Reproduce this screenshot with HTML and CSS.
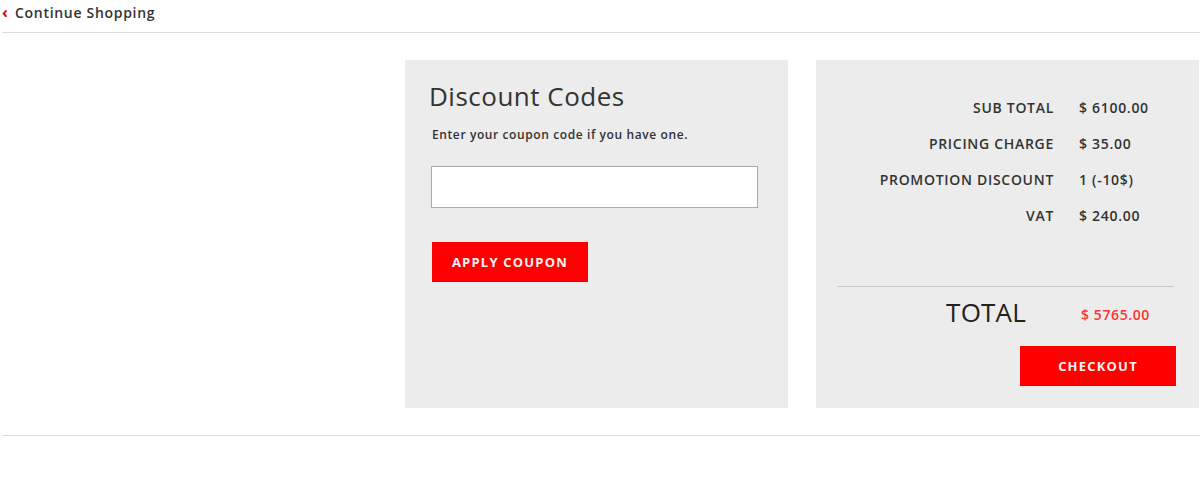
FILE: index.html
```html
<!DOCTYPE html>
<html>
<head>
<meta charset="utf-8">
<link rel="stylesheet" href="styles.css">
</head>
<body>
<div class="topbar">
  <a class="back" href="#"><span class="chev">&#8249;</span>Continue Shopping</a>
</div>
<div class="cart-bottom">
  <div class="spacer"></div>
  <div class="panel discount">
    <h2 class="title">Discount Codes</h2>
    <p class="hint">Enter your coupon code if you have one.</p>
    <input class="coupon" type="text">
    <button class="btn">APPLY COUPON</button>
  </div>
  <div class="panel summary">
    <div class="rows">
      <div class="label">SUB TOTAL</div><div class="value">$ 6100.00</div>
      <div class="label">PRICING CHARGE</div><div class="value">$ 35.00</div>
      <div class="label">PROMOTION DISCOUNT</div><div class="value">1 (-10$)</div>
      <div class="label">VAT</div><div class="value">$ 240.00</div>
    </div>
    <div class="total">
      <div class="total-label">TOTAL</div>
      <div class="total-value">$ 5765.00</div>
    </div>
    <div class="actions"><button class="btn checkout">CHECKOUT</button></div>
  </div>
</div>
<div class="footer-line"></div>
</body>
</html>
```
FILE: styles.css
```css
* { box-sizing: border-box; }
body {
  margin: 0;
  font-family: "Open Sans", "Liberation Sans", sans-serif;
  color: #333;
  background: #fff;
}
.topbar {
  margin-left: 2px;
  height: 33px;
  border-bottom: 1px solid #ddd;
}
.back {
  display: flex;
  align-items: center;
  height: 25px;
  color: #333;
  text-decoration: none;
  font-size: 14px;
  font-weight: 600;
  letter-spacing: 0.7px;
}
.chev {
  color: #e00;
  font-size: 16px;
  font-weight: 700;
  width: 13px;
  margin-top: -2px;
}
.cart-bottom {
  display: grid;
  grid-template-columns: 377px 383px 383px;
  column-gap: 28px;
  margin-top: 27px;
}
.panel {
  background: #ececec;
  height: 348px;
}
.discount {
  padding: 19px 30px 0 24px;
}
.title {
  margin: 0;
  font-size: 26px;
  font-weight: 500;
  letter-spacing: 0.5px;
  line-height: 34px;
}
.hint {
  margin: 13px 0 0 3px;
  font-size: 12px;
  font-weight: 600;
  letter-spacing: 0.6px;
  line-height: 18px;
}
.coupon {
  display: block;
  margin: 22px 0 0 2px;
  width: 327px;
  height: 42px;
  border: 1px solid #aaa;
  background: #fff;
}
.btn {
  display: block;
  border: 0;
  background: #ff0000;
  color: #f2f2f2;
  font-family: inherit;
  font-size: 13px;
  font-weight: 700;
  letter-spacing: 1.2px;
  height: 40px;
  width: 156px;
  padding: 0;
}
.discount .btn {
  margin: 34px 0 0 3px;
}
.summary {
  padding: 30px 25px 0 22px;
  display: flex;
  flex-direction: column;
}
.rows {
  display: grid;
  grid-template-columns: 1fr 95px;
  column-gap: 25px;
  font-size: 14px;
  font-weight: 600;
  letter-spacing: 0.7px;
  line-height: 36px;
  padding-bottom: 52px;
  border-bottom: 1px solid #c4c4c4;
}
.label { text-align: right; }
.total {
  display: grid;
  grid-template-columns: 1fr 95px;
  column-gap: 53px;
  align-items: center;
  margin-top: 7px;
  height: 32px;
}
.total-label {
  text-align: right;
  font-size: 26px;
  font-weight: 500;
  letter-spacing: 0.2px;
  color: #222;
}
.total-value {
  color: #f33;
  font-size: 14px;
  font-weight: 600;
  letter-spacing: 0.6px;
  padding-top: 5px;
  margin-left: 2px;
}
.actions {
  display: flex;
  justify-content: flex-end;
  margin-top: 20px;
  margin-right: -2px;
}
.footer-line {
  margin: 27px 0 0 2px;
  border-top: 1px solid #ddd;
}
```
